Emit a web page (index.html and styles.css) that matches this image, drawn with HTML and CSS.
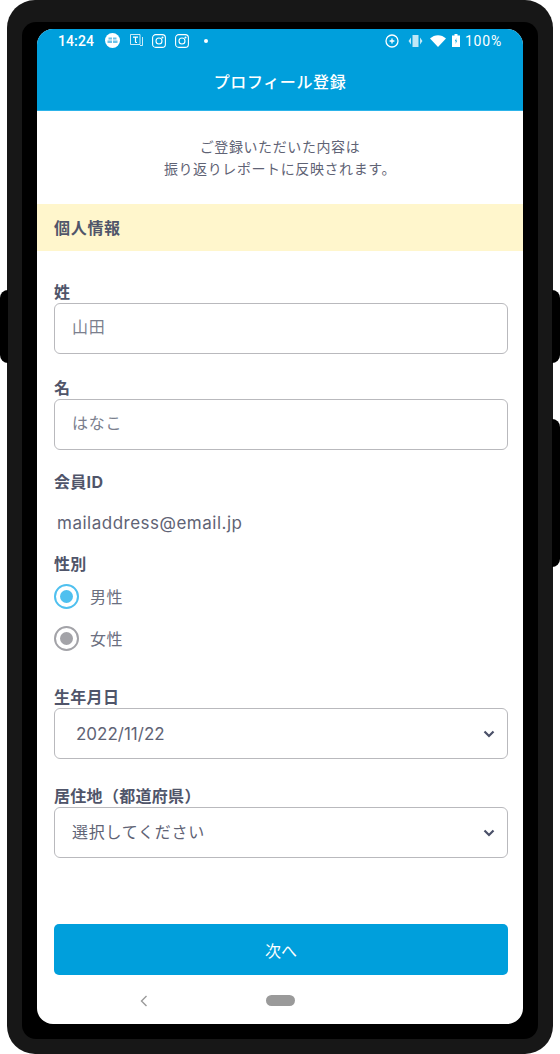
FILE: index.html
```html
<!DOCTYPE html>
<html lang="ja">
<head>
    <meta charset="UTF-8">
    <meta name="viewport" content="width=device-width, initial-scale=1.0">
    <title>プロフィール登録</title>
    <link rel="stylesheet" href="styles.css">
</head>
<body>
    <div class="phone">
        <span class="side side-left"></span>
        <span class="side side-right1"></span>
        <span class="side side-right2"></span>
        <div class="bezel">
            <div class="screen">
                <div class="topbar">
                    <div class="status">
                        <span class="time">14:24</span>
                        <svg class="ico" width="15" height="15" viewBox="0 0 15 15"><circle cx="7.5" cy="7.5" r="7.500" fill="#fff"/><path d="M3.500 4.500h3.500v2h-3.500zM8 4.500h3.500v2H8zM2.500 7.500h4.500v2.500H2.500zM8 7.500h4.500v2.500H8z" fill="#6cc2e8"/></svg>
                        <svg class="ico ico-t" width="13" height="13" viewBox="0 0 13 13" fill="none" stroke="#fff"><path d="M.5.5h9.500v10H.5zM10 11.500h2.500V3" stroke-width=".8"/><path d="M3 3.200h5M5.500 3.200v5.300M5.500 8.500H7" stroke-width="1.200"/></svg>
                        <svg class="ico" width="14" height="14" viewBox="0 0 14 14" fill="none" stroke="#fff" stroke-width="1.100"><rect x=".6" y=".6" width="12.800" height="12.800" rx="3.200"/><circle cx="7" cy="7" r="3"/><circle cx="10.500" cy="3.500" r=".5" fill="#fff"/></svg>
                        <svg class="ico" width="14" height="14" viewBox="0 0 14 14" fill="none" stroke="#fff" stroke-width="1.100"><rect x=".6" y=".6" width="12.800" height="12.800" rx="3.200"/><circle cx="7" cy="7" r="3"/><circle cx="10.500" cy="3.500" r=".5" fill="#fff"/></svg>
                        <span class="dot"></span>
                        <div class="status-right">
                            <svg width="14" height="14" viewBox="0 0 14 14" fill="none" stroke="#fff" stroke-width="1.300"><circle cx="7" cy="7" r="6"/><path d="M7 4.600v4.800M4.600 7h4.800"/></svg>
                            <svg class="vibrate" width="15" height="12" viewBox="0 0 15 12" fill="#fff" fill-opacity=".75"><path d="M4.500 0h6v12h-6zM3 2.500v7L.5 6zM12 2.500v7L14.500 6z"/></svg>
                            <svg class="wifi" width="16" height="12" viewBox="0 0 16 12" fill="#fff"><path d="M0 3.500C4.500-1 11.500-1 16 3.500L8 12z"/></svg>
                            <svg class="battery" width="8" height="13" viewBox="0 0 8 13"><path d="M2.500 0h3v1.500H8V13H0V1.500h2.500z" fill="#fff"/><path d="M4.500 4 2.800 7.300h1.100L3.500 10l1.700-3.400H4.100z" fill="#009fdc"/></svg>
                            <span class="percent">100%</span>
                        </div>
                    </div>
                    <h1 class="title">プロフィール登録</h1>
                </div>

                <p class="intro">ご登録いただいた内容は<br>振り返りレポートに反映されます。</p>
                <h2 class="band">個人情報</h2>

                <div class="form">
                    <div class="field field-sei">
                        <label class="label">姓</label>
                        <div class="box">山田</div>
                    </div>
                    <div class="field field-mei">
                        <label class="label">名</label>
                        <div class="box">はなこ</div>
                    </div>
                    <div class="field field-id">
                        <label class="label">会員ID</label>
                        <div class="plain">mailaddress@email.jp</div>
                    </div>
                    <div class="field field-sex">
                        <label class="label">性別</label>
                        <div class="radio radio-on"><span class="mark"></span>男性</div>
                        <div class="radio radio-off"><span class="mark"></span>女性</div>
                    </div>
                    <div class="field field-birth">
                        <label class="label">生年月日</label>
                        <div class="box select date">2022/11/22
                            <svg class="chev" width="12" height="8" viewBox="0 0 12 8" fill="none" stroke="#4a5068" stroke-width="2.200"><path d="M1.500 1.500 6 6l4.500-4.500"/></svg>
                        </div>
                    </div>
                    <div class="field field-pref">
                        <label class="label">居住地（都道府県）</label>
                        <div class="box select">選択してください
                            <svg class="chev" width="12" height="8" viewBox="0 0 12 8" fill="none" stroke="#4a5068" stroke-width="2.200"><path d="M1.500 1.500 6 6l4.500-4.500"/></svg>
                        </div>
                    </div>
                    <button class="next">次へ</button>
                </div>

                <div class="navbar">
                    <svg class="back" width="8" height="12" viewBox="0 0 8 12" fill="none" stroke="#9a9a9a" stroke-width="1.400"><path d="M6.500 1 1.500 6l5 5"/></svg>
                    <span class="home"></span>
                </div>
            </div>
        </div>
    </div>
</body>
</html>
```
FILE: styles.css
```css
* {
    box-sizing: border-box;
}
html, body {
    margin: 0;
    padding: 0;
    background-color: white;
}
body {
    font-family: "Inter", "Noto Sans CJK JP", sans-serif;
    color: #5f6375;
    width: 560px;
    height: 1054px;
    overflow: hidden;
}
.phone {
    position: relative;
    width: 546px;
    height: 1054px;
    margin: 0 7px;
    background-color: #171717;
    border-radius: 28px;
    padding: 22px 15px 15px;
}
.side {
    position: absolute;
    background-color: black;
    width: 8px;
}
.side-left {
    left: -7px;
    top: 290px;
    height: 73px;
    border-radius: 8px 0 0 8px;
}
.side-right1 {
    right: -7px;
    top: 290px;
    height: 73px;
    border-radius: 0 8px 8px 0;
}
.side-right2 {
    right: -7px;
    top: 419px;
    height: 148px;
    border-radius: 0 8px 8px 0;
}
.bezel {
    background-color: black;
    height: 1017px;
    border-radius: 14px;
    padding: 7px 15px 15px;
}
.screen {
    background-color: white;
    height: 995px;
    border-radius: 16px;
    overflow: hidden;
    display: flex;
    flex-direction: column;
}
.topbar {
    background-color: #009fdc;
    height: 82px;
    flex-shrink: 0;
    border-bottom: 1px solid #2cb4ea;
    color: white;
}
.status {
    display: flex;
    align-items: center;
    height: 23px;
    padding: 0 21px;
}
.time {
    font-size: 14px;
    font-weight: 500;
    width: 47px;
    color: white;
    font-family: "Roboto", sans-serif;
    letter-spacing: .1px;
}
.ico {
    margin-right: 9px;
}
.ico:first-of-type {
    margin-right: 10px;
}
.dot {
    width: 4px;
    height: 4px;
    background-color: white;
    border-radius: 50%;
    margin-left: 6px;
}
.status-right {
    margin-left: auto;
    display: flex;
    align-items: center;
}
.vibrate {
    margin-left: 9px;
}
.wifi {
    margin-left: 7px;
}
.battery {
    margin-left: 6px;
}
.percent {
    font-size: 14px;
    margin-left: 5px;
    letter-spacing: .8px;
    font-family: "Roboto", sans-serif;
}
.title {
    margin: 0;
    text-align: center;
    font-size: 16px;
    font-weight: 500;
    line-height: 24px;
    padding-top: 18px;
    letter-spacing: .6px;
}
.intro {
    margin: 0;
    flex-shrink: 0;
    height: 93px;
    padding-top: 25px;
    text-align: center;
    font-size: 14px;
    letter-spacing: .6px;
    line-height: 22px;
}
.band {
    margin: 0;
    flex-shrink: 0;
    height: 47px;
    line-height: 48px;
    background-color: #fff6cc;
    padding-left: 17px;
    font-size: 16px;
    letter-spacing: .7px;
    font-weight: 700;
    color: #50556a;
}
.form {
    padding: 0 15px 0 17px;
    flex: 1;
    display: flex;
    flex-direction: column;
}
.label {
    display: block;
    font-size: 16px;
    letter-spacing: .3px;
    font-weight: 700;
    line-height: 22px;
    color: #50556a;
}
.box {
    position: relative;
    height: 51px;
    border: 1px solid #b9b9bd;
    border-radius: 6px;
    padding-left: 17px;
    line-height: 47px;
    font-size: 16px;
    letter-spacing: .75px;
    color: #7b7f8e;
}
.select {
    color: #5f6375;
    line-height: 49px;
}
.date {
    padding-left: 21px;
    font-size: 17px;
    letter-spacing: 0;
    line-height: 51px;
}
.chev {
    position: absolute;
    right: 12px;
    top: 21px;
}
.field-sei {
    margin-top: 30px;
}
.field-mei {
    margin-top: 23px;
}
.field-id {
    margin-top: 21px;
}
.plain {
    font-size: 17px;
    letter-spacing: .5px;
    line-height: 24px;
    padding: 18px 0 0 3px;
}
.field-sex {
    margin-top: 18px;
}
.radio {
    display: flex;
    align-items: center;
    height: 26px;
    font-size: 16px;
    letter-spacing: .5px;
    color: #6b6f80;
}
.radio-on {
    margin-top: 8px;
}
.radio-off {
    margin-top: 16px;
}
.mark {
    width: 25px;
    height: 25px;
    border-radius: 50%;
    margin-right: 11px;
    border: 2px solid #4fc0ef;
    background-color: white;
    display: flex;
    align-items: center;
    justify-content: center;
}
.mark::after {
    content: "";
    width: 13px;
    height: 13px;
    border-radius: 50%;
    background-color: #4fc0ef;
}
.radio-off .mark {
    border-color: #a3a3a8;
}
.radio-off .mark::after {
    background-color: #a3a3a8;
}
.field-birth {
    margin-top: 35px;
}
.field-pref {
    margin-top: 26px;
}
.next {
    margin-top: 66px;
    height: 51px;
    flex-shrink: 0;
    border: none;
    border-radius: 5px;
    background-color: #009fdc;
    color: white;
    font-family: inherit;
    font-size: 16px;
}
.navbar {
    position: relative;
    height: 49px;
    flex-shrink: 0;
    padding-top: 2px;
    display: flex;
    align-items: center;
    justify-content: center;
}
.back {
    position: absolute;
    left: 103px;
    top: 20px;
}
.home {
    width: 29px;
    height: 11px;
    border-radius: 6px;
    background-color: #9a9a9a;
}
```
